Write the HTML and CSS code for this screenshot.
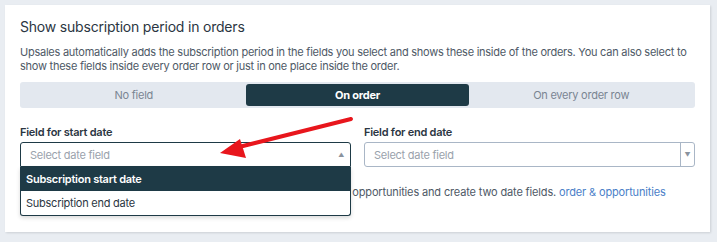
FILE: index.html
```html
<!DOCTYPE html>
<html>
<head>
<meta charset="utf-8">
<link rel="stylesheet" href="styles.css">
</head>
<body>
<div class="card">
  <h2 class="title">Show subscription period in orders</h2>
  <p class="desc">Upsales automatically adds the subscription period in the fields you select and shows these inside of the orders. You can also select to show these fields inside every order row or just in one place inside the order.</p>
  <div class="segments">
    <div class="seg">No field</div>
    <div class="seg active">On order</div>
    <div class="seg">On every order row</div>
  </div>
  <div class="fields">
    <div class="field">
      <label class="label">Field for start date</label>
      <div class="select open">
        <span class="placeholder">Select date field</span>
        <span class="caret-up">&#9650;</span>
        <div class="dropdown">
          <div class="opt selected">Subscription start date</div>
          <div class="opt">Subscription end date</div>
        </div>
      </div>
    </div>
    <div class="field">
      <label class="label">Field for end date</label>
      <div class="select">
        <span class="placeholder">Select date field</span>
        <span class="arrow-box"><span class="caret-down">&#9660;</span></span>
      </div>
    </div>
  </div>
  <p class="help">If you wish to use this feature you need to go to settings for order opportunities and create two date fields. <a class="link">order &amp; opportunities</a></p>
  <svg class="pointer" width="140" height="50" viewBox="0 0 140 50">
    <line x1="136" y1="4" x2="20" y2="33" stroke="#e8161c" stroke-width="4" stroke-linecap="round"/>
    <polygon points="5,38 25,24 31,43" fill="#e8161c"/>
  </svg>
</div>
</body>
</html>
```
FILE: styles.css
```css
* { box-sizing: border-box; }
html, body { margin: 0; padding: 0; }
body {
  background: #e9edf2;
  padding: 5px;
  font-family: Inter, "Noto Sans", sans-serif;
  color: #3a4654;
}
.card {
  position: relative;
  width: 705px;
  height: 227px;
  background: #ffffff;
  box-shadow: 1px 1px 2px rgba(0, 0, 0, 0.12);
  padding: 13px 15px 0 15px;
  letter-spacing: -0.25px;
}
.title {
  margin: 0;
  font-size: 14px;
  font-weight: 400;
  line-height: 17px;
  color: #2b3642;
  letter-spacing: -0.2px;
}
.desc {
  margin: 11px 0 0 0;
  font-size: 11px;
  line-height: 13.5px;
  color: #4e5966;
}
.segments {
  margin-top: 9px;
  display: grid;
  grid-template-columns: 1fr 1fr 1fr;
  height: 26px;
  padding: 2px;
  border-radius: 3px;
  background: #e3e8ef;
}
.seg {
  display: flex;
  align-items: center;
  justify-content: center;
  font-size: 11px;
  color: #7a8592;
  border-radius: 3px;
}
.seg.active {
  background: #1e3a46;
  color: #ffffff;
  font-weight: 700;
}
.fields {
  margin-top: 17px;
  display: grid;
  grid-template-columns: 331px 331px;
  column-gap: 13px;
}
.label {
  display: block;
  font-size: 11px;
  font-weight: 600;
  line-height: 14px;
  color: #2b3642;
  margin-bottom: 3px;
}
.select {
  position: relative;
  height: 25px;
  border: 1px solid #a9b6c6;
  border-radius: 3px;
  display: flex;
  align-items: center;
  padding-left: 9px;
}
.select.open {
  border-color: #1e3a46;
  border-radius: 3px 3px 0 0;
}
.placeholder {
  font-size: 11px;
  color: #9aa2ac;
}
.caret-up {
  position: absolute;
  right: 6px;
  top: 8px;
  font-size: 6px;
  color: #8a939e;
}
.arrow-box {
  position: absolute;
  right: 0;
  top: 0;
  bottom: 0;
  width: 14px;
  border-left: 1px solid #a9b6c6;
  display: flex;
  align-items: center;
  justify-content: center;
}
.caret-down {
  font-size: 6px;
  color: #8a939e;
}
.dropdown {
  position: absolute;
  left: -1px;
  right: -1px;
  top: 24px;
  background: #ffffff;
  border: 1px solid #1e3a46;
  border-top: none;
  border-radius: 0 0 3px 3px;
  box-shadow: 0 2px 4px rgba(0, 0, 0, 0.15);
  z-index: 2;
}
.opt {
  height: 24px;
  display: flex;
  align-items: center;
  padding-left: 5px;
  font-size: 11px;
  color: #2b3642;
}
.opt.selected {
  background: #1e3a46;
  color: #ffffff;
  font-weight: 600;
}
.help {
  margin: 18px 0 0 0;
  font-size: 11px;
  line-height: 14px;
  color: #4e5966;
  letter-spacing: -0.15px;
}
.link {
  color: #4a80c8;
}
.pointer {
  position: absolute;
  left: 210px;
  top: 110px;
  z-index: 3;
}
```
